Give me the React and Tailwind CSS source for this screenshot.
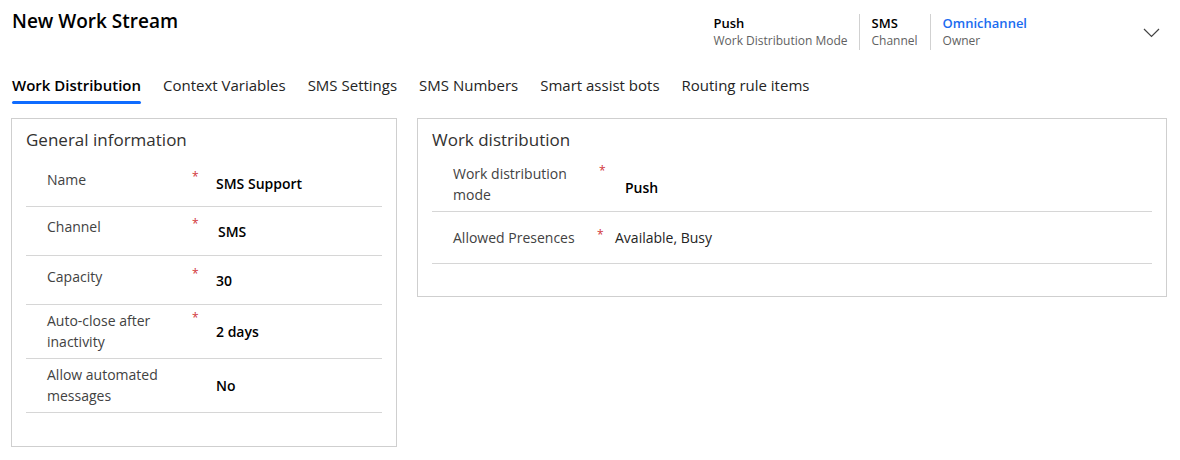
import React from 'react';

const tabs = ['Work Distribution', 'Context Variables', 'SMS Settings', 'SMS Numbers', 'Smart assist bots', 'Routing rule items'];

const generalRows = [
  { label: ['Name'], value: 'SMS Support', required: true, h: 'h-[47px]', pt: 'pt-[9px]', vx: 'ml-0' },
  { label: ['Channel'], value: 'SMS', required: true, h: 'h-[49px]', pt: 'pt-[9px]', vx: 'ml-[2px]' },
  { label: ['Capacity'], value: '30', required: true, h: 'h-[49px]', pt: 'pt-[10px]', vx: 'ml-0' },
  { label: ['Auto-close after', 'inactivity'], value: '2 days', required: true, h: 'h-[54px]', pt: 'pt-[5px]', vx: 'ml-0' },
  { label: ['Allow automated', 'messages'], value: 'No', required: false, h: 'h-[54px]', pt: 'pt-[5px]', vx: 'ml-0' },
];

const Asterisk = () => (
  <span className="inline-block -translate-y-[6px] text-[#d13438] text-[12px] leading-none">*</span>
);

const Row = ({ row, labelW, starW }) => (
  <div className={`flex items-center border-b border-[#d6d6d6] ${row.h}`}>
    <div className={`self-start ${row.pt} pl-[21px] ${labelW} text-[14px] leading-[21px] text-[#424242]`}>
      {row.label.map((l) => <div key={l}>{l}</div>)}
    </div>
    <div className={`self-start ${row.pt} ${starW}`}>{row.required && <Asterisk />}</div>
    <div className={`${row.vx} text-[14px] font-semibold text-black`}>{row.value}</div>
  </div>
);

export default function App() {
  return (
    <div className="w-[1180px] h-[460px] bg-white overflow-hidden text-[#242424]" style={{ fontFamily: '"Open Sans", "Noto Sans", sans-serif' }}>
      {/* header */}
      <div className="flex items-start pl-[12px] pr-[20px] pt-[8px]">
        <h1 className="text-[19px] font-semibold leading-[26px] text-black flex-1">New Work Stream</h1>
        <div className="flex items-stretch pt-[6px] mr-[116px]">
          <div className="pr-[11px] border-r border-[#d1d1d1]">
            <div className="text-[13px] font-semibold leading-[18px] text-black">Push</div>
            <div className="text-[12px] leading-[18px] text-[#616161]">Work Distribution Mode</div>
          </div>
          <div className="px-[12px] border-r border-[#d1d1d1]">
            <div className="text-[13px] font-semibold leading-[18px] text-black">SMS</div>
            <div className="text-[12px] leading-[18px] text-[#616161]">Channel</div>
          </div>
          <div className="pl-[12px]">
            <div className="text-[13px] font-semibold leading-[18px] text-[#1a6cf0]">Omnichannel</div>
            <div className="text-[12px] leading-[18px] text-[#616161]">Owner</div>
          </div>
        </div>
        <svg width="17" height="10" viewBox="0 0 17 10" className="mt-[20px]" fill="none">
          <path d="M1 1l7.5 7.5L16 1" stroke="#424242" strokeWidth="1.2" />
        </svg>
      </div>

      {/* tabs */}
      <div className="flex gap-[22px] pl-[12px] mt-[24px]">
        {tabs.map((t, i) => (
          <div key={t} className="flex flex-col">
            <span className={`text-[15px] leading-[22px] ${i === 0 ? 'font-semibold text-black' : 'text-[#242424]'}`}>{t}</span>
            <span className={`mt-[5px] h-[3px] rounded-full ${i === 0 ? 'bg-[#0f6cff]' : 'bg-transparent'}`} />
          </div>
        ))}
      </div>

      {/* cards */}
      <div className="flex items-start gap-[20px] pl-[11px] mt-[14px]">
        <div className="w-[386px] h-[329px] border border-[#cfcfcf] pt-[9px] px-[14px]">
          <h2 className="text-[17px] leading-[24px] text-[#323130] mb-[8px]">General information</h2>
          {generalRows.map((r) => (
            <Row key={r.value} row={r} labelW="w-[166px]" starW="w-[24px]" />
          ))}
        </div>

        <div className="w-[750px] h-[179px] border border-[#cfcfcf] pt-[9px] px-[14px]">
          <h2 className="text-[17px] leading-[24px] text-[#323130] mb-[6px]">Work distribution</h2>
          <div className="flex items-center border-b border-[#d6d6d6] h-[54px]">
            <div className="self-start pt-[5px] pl-[21px] w-[167px] text-[14px] leading-[21px] text-[#424242]">
              <div>Work distribution</div>
              <div>mode</div>
            </div>
            <div className="self-start pt-[5px] w-[26px]"><Asterisk /></div>
            <div className="mt-[5px] text-[14px] font-semibold text-black">Push</div>
          </div>
          <div className="flex items-center border-b border-[#d6d6d6] h-[52px]">
            <div className="self-start pt-[15px] pl-[21px] w-[165px] text-[14px] leading-[21px] text-[#424242]">Allowed Presences</div>
            <div className="self-start pt-[15px] w-[18px]"><Asterisk /></div>
            <div className="text-[14px] text-[#242424]">Available, Busy</div>
          </div>
        </div>
      </div>
    </div>
  );
}
